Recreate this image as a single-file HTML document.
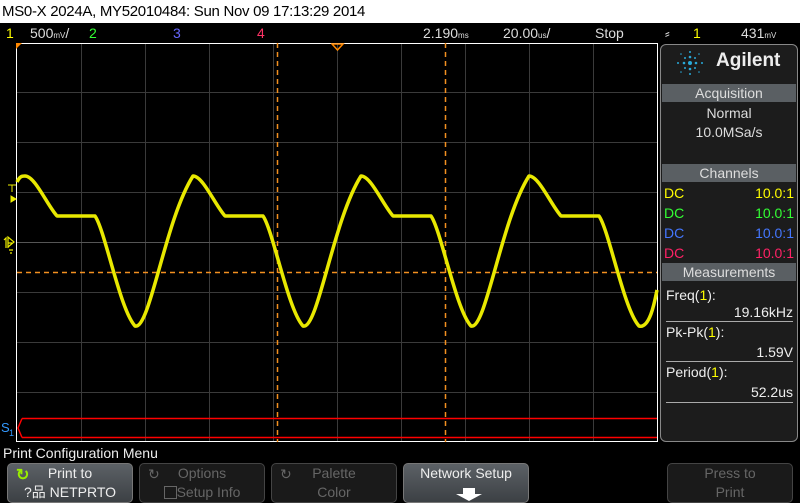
<!DOCTYPE html>
<html><head><meta charset="utf-8"><style>
*{margin:0;padding:0;box-sizing:border-box}
body{width:800px;height:503px;background:#000;overflow:hidden;position:relative;font-family:"Liberation Sans",sans-serif;color:#fff}
.a{position:absolute;white-space:nowrap}
.btn{position:absolute;top:463px;height:40px;border-radius:5px;text-align:center;font-size:14px;line-height:19px}
.on{background:linear-gradient(#5c6166,#3c4044);border:1px solid #777;color:#eee}
.off{background:#1a1a1a;border:1px solid #444;color:#666}
.hd{position:absolute;left:662px;width:134px;height:18px;background:#5a5f63;color:#ddd;font-size:14px;text-align:center;line-height:18px}
</style></head><body>
<div class="a" style="left:0;top:0;width:800px;height:23px;background:#fff;color:#000;font-size:15px;line-height:23px;padding-left:2px;letter-spacing:-0.3px">MS0-X 2024A, MY52010484: Sun Nov 09 17:13:29 2014</div>
<div class="a" style="top:23px;left:0;font-size:14px;line-height:20px;width:800px;height:20px">
<span class="a" style="left:6px;color:#ff0">1</span>
<span class="a" style="left:30px;color:#ddd">500<small style="font-size:8px">mV</small>/</span>
<span class="a" style="left:89px;color:#3f3">2</span>
<span class="a" style="left:173px;color:#66f">3</span>
<span class="a" style="left:257px;color:#f36">4</span>
<span class="a" style="left:423px;color:#ddd">2.190<small style="font-size:8px">ms</small></span>
<span class="a" style="left:503px;color:#ddd">20.00<small style="font-size:8px">us</small>/</span>
<span class="a" style="left:595px;color:#ddd">Stop</span>
<span class="a" style="left:665px;color:#ddd">⸗</span>
<span class="a" style="left:693px;color:#ff0">1</span>
<span class="a" style="left:741px;color:#ddd">431<small style="font-size:8px">mV</small></span>
</div>
<svg class="a" style="left:0;top:0" width="800" height="503">
<g stroke="#3a3a3a" stroke-width="1">
<path d="M81.5,43V442M145.5,43V442M209.5,43V442M273.5,43V442M337.5,43V442M401.5,43V442M465.5,43V442M529.5,43V442M593.5,43V442"/>
<path d="M17,92.5H657M17,142.5H657M17,192.5H657M17,292.5H657M17,342.5H657M17,392.5H657"/>
<path d="M17,242.5H657" stroke="#555"/>
</g>
<path d="M17,43.5H657M657.5,43V442M17,441.5H657M16.5,43V442" stroke="#fff" fill="none"/>
<path d="M16,43 L22,43 L16,49Z" fill="#f80"/>
<path d="M332,44 L343,44 L337.5,50Z" fill="none" stroke="#f80" stroke-width="1.5"/>
<path d="M277.5,43V442M445.5,43V442M17,272.5H657" stroke="#f39020" stroke-width="1.5" stroke-dasharray="5,4"/>
<path d="M17,182 C20,176 22,176 25,176 C35,176 47,205 57,216 L95,216 C105,230 120,310 135,326 C150,330 165,220 193,176 C203,176 215,205 225,216 L263,216 C273,230 288,310 303,326 C318,330 333,220 361,176 C371,176 383,205 393,216 L431,216 C441,230 456,310 471,326 C486,330 501,220 529,176 C539,176 551,205 561,216 L599,216 C609,230 624,310 639,326 C650,329 655,300 657,290" fill="none" stroke="#e8e800" stroke-width="3.5" stroke-linejoin="round"/>
<path d="M22,418.5H657M22,437.5H657M22,418.5L18,428L22,437.5" fill="none" stroke="#f00" stroke-width="1.5"/>
<path d="M8,185H16M12,185V192M11,196L16,199L11,202Z" stroke="#ee0" fill="#ee0" stroke-width="1"/>
<path d="M4,240L6,238V248M8,248V243H12M9,250H13M10,253H12M8,247L14,242L8,237Z" stroke="#ee0" fill="none" stroke-width="1.2"/>
<text x="1" y="432" fill="#39f" font-size="13" font-family="Liberation Sans">S</text><text x="9" y="436" fill="#39f" font-size="9" font-family="Liberation Sans">1</text>
</svg>
<div class="a" style="left:660px;top:44px;width:138px;height:398px;border:1px solid #888;border-radius:6px;background:#1c1c1c"></div>
<svg class="a" style="left:675px;top:50px" width="30" height="26"><g fill="#29a8d8"><circle cx="15" cy="13" r="2"/><circle cx="15" cy="7" r="1.3"/><circle cx="15" cy="19" r="1.3"/><circle cx="9" cy="13" r="1.3"/><circle cx="21" cy="13" r="1.3"/><circle cx="10" cy="8" r="1"/><circle cx="20" cy="8" r="1"/><circle cx="10" cy="18" r="1"/><circle cx="20" cy="18" r="1"/><circle cx="15" cy="2" r="1"/><circle cx="15" cy="24" r="1"/><circle cx="3" cy="13" r="1"/><circle cx="27" cy="13" r="1"/><circle cx="6" cy="4" r="0.8"/><circle cx="24" cy="4" r="0.8"/><circle cx="6" cy="22" r="0.8"/><circle cx="24" cy="22" r="0.8"/></g></svg>
<div class="a" style="left:716px;top:50px;font-size:19px;font-weight:bold;color:#eee">Agilent</div>
<div class="hd" style="top:84px">Acquisition</div>
<div class="a" style="left:662px;width:134px;text-align:center;top:104px;font-size:14px;color:#ddd;line-height:19px">Normal<br>10.0MSa/s</div>
<div class="hd" style="top:164px">Channels</div>
<div class="a" style="left:664px;top:183px;font-size:14px;line-height:20px"><span style="color:#ff0">DC</span><br><span style="color:#3f3">DC</span><br><span style="color:#47f">DC</span><br><span style="color:#f26">DC</span></div>
<div class="a" style="left:700px;width:94px;text-align:right;top:183px;font-size:14px;line-height:20px"><span style="color:#ff0">10.0:1</span><br><span style="color:#3f3">10.0:1</span><br><span style="color:#47f">10.0:1</span><br><span style="color:#f26">10.0:1</span></div>
<div class="hd" style="top:263px">Measurements</div>
<div class="a" style="left:666px;top:285px;font-size:14px;color:#eee;line-height:20px">Freq(<span style="color:#ff0">1</span>):</div>
<div class="a" style="left:666px;width:127px;text-align:right;top:304px;font-size:14px;color:#eee">19.16kHz</div>
<div class="a" style="left:666px;top:321px;width:127px;border-top:1px solid #aaa"></div>
<div class="a" style="left:666px;top:324px;font-size:14px;color:#eee">Pk-Pk(<span style="color:#ff0">1</span>):</div>
<div class="a" style="left:666px;width:127px;text-align:right;top:344px;font-size:14px;color:#eee">1.59V</div>
<div class="a" style="left:666px;top:361px;width:127px;border-top:1px solid #aaa"></div>
<div class="a" style="left:666px;top:364px;font-size:14px;color:#eee">Period(<span style="color:#ff0">1</span>):</div>
<div class="a" style="left:666px;width:127px;text-align:right;top:384px;font-size:14px;color:#eee">52.2us</div>
<div class="a" style="left:666px;top:402px;width:127px;border-top:1px solid #aaa"></div>
<div class="a" style="left:3px;top:445px;font-size:14px;color:#eee">Print Configuration Menu</div>
<div class="btn on" style="left:7px;width:126px"><span style="position:absolute;left:8px;top:2px;color:#9e0;font-weight:bold;font-size:16px">↻</span>Print to<br>?品 NETPRTO</div>
<div class="btn off" style="left:139px;width:126px"><span style="position:absolute;left:8px;top:1px">↻</span>Options<br><span style="display:inline-block;width:13px;height:13px;border:1px solid #666;vertical-align:-2px"></span>Setup Info</div>
<div class="btn off" style="left:271px;width:126px"><span style="position:absolute;left:8px;top:1px">↻</span>Palette<br>Color</div>
<div class="btn on" style="left:403px;width:126px">Network Setup<svg style="position:absolute;left:50px;top:24px" width="30" height="14"><path d="M9,0H21V6H28L15,13L2,6H9Z" fill="#fff"/></svg></div>
<div class="btn off" style="left:667px;width:126px">Press to<br>Print</div>
</body></html>
